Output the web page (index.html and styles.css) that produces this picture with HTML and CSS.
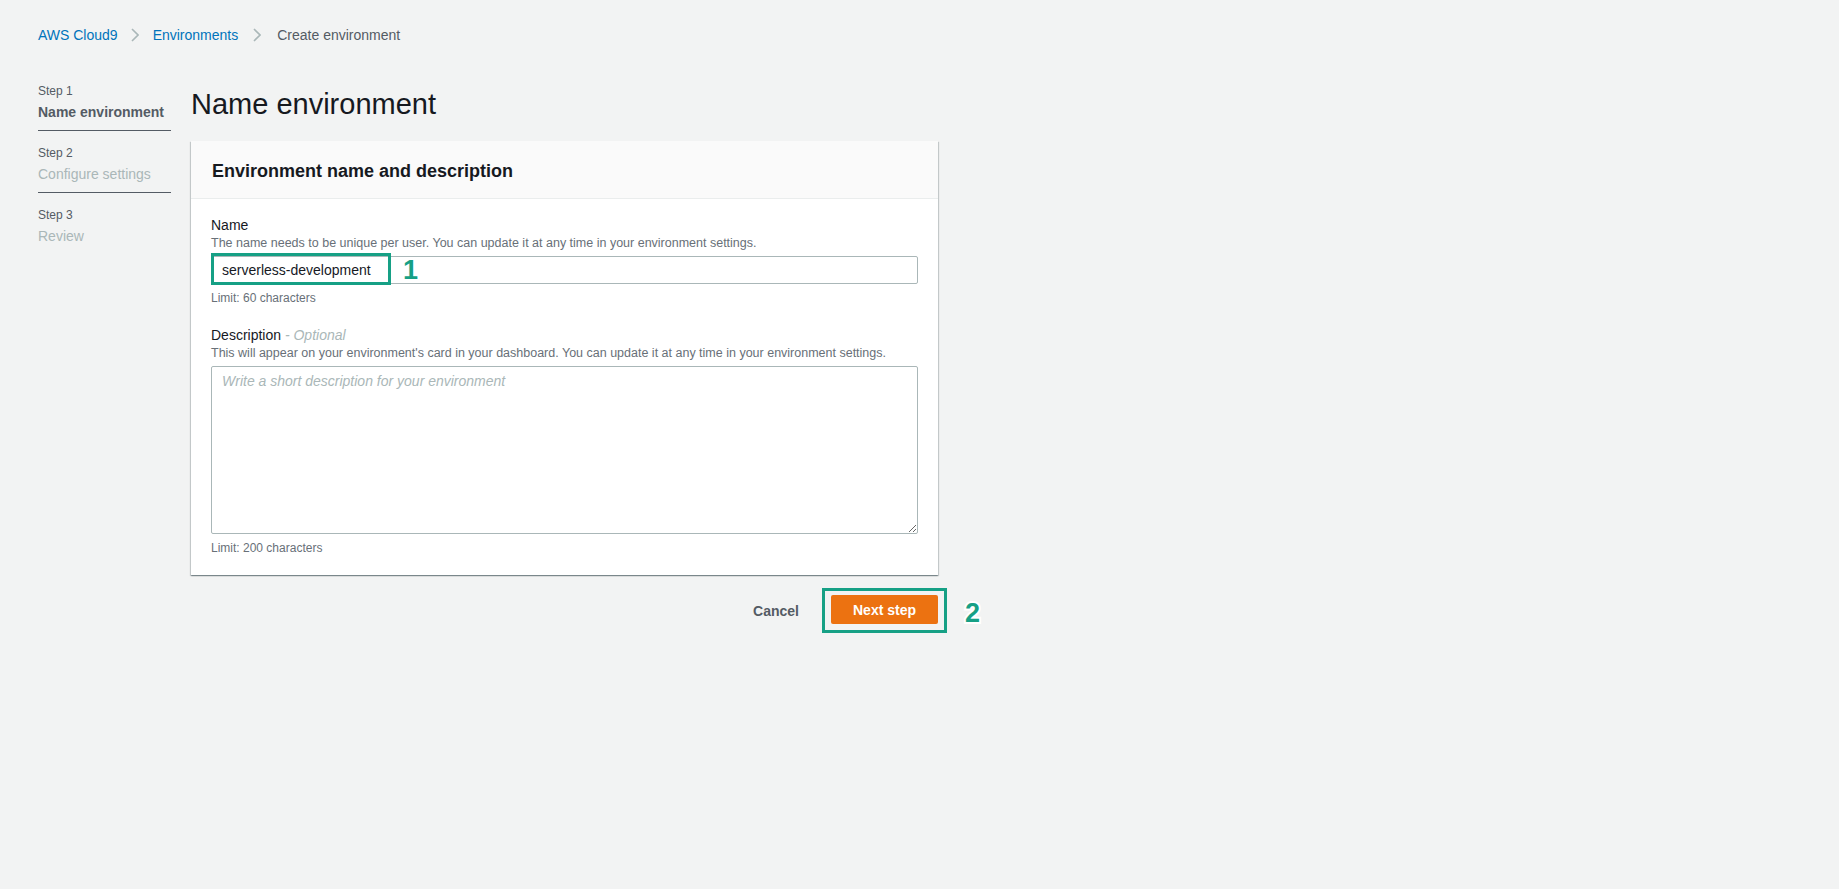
FILE: index.html
```html
<!DOCTYPE html>
<html lang="en">
<head>
  <meta charset="UTF-8">
  <title>Create environment - AWS Cloud9</title>
  <link rel="stylesheet" href="styles.css">
</head>
<body>

  <nav class="breadcrumbs">
    <a href="#">AWS Cloud9</a>
    <span class="sep"><svg width="8" height="14" viewBox="0 0 8 14"><path d="M1 1l6 6-6 6" fill="none" stroke="#aab7b8" stroke-width="1.6"/></svg></span>
    <a href="#">Environments</a>
    <span class="sep sep-last"><svg width="8" height="14" viewBox="0 0 8 14"><path d="M1 1l6 6-6 6" fill="none" stroke="#aab7b8" stroke-width="1.6"/></svg></span>
    <span class="current">Create environment</span>
  </nav>

  <div class="wizard">
    <ul class="steps">
      <li class="step active">
        <span class="step-num">Step 1</span>
        <span class="step-name">Name environment</span>
      </li>
      <li class="step">
        <span class="step-num">Step 2</span>
        <span class="step-name">Configure settings</span>
      </li>
      <li class="step">
        <span class="step-num">Step 3</span>
        <span class="step-name">Review</span>
      </li>
    </ul>

    <main class="content">
      <h1 class="page-title">Name environment</h1>

      <section class="card">
        <header class="card-header">
          <h2>Environment name and description</h2>
        </header>
        <div class="card-body">
          <div class="field">
            <label class="field-label" for="env-name">Name</label>
            <div class="field-help">The name needs to be unique per user. You can update it at any time in your environment settings.</div>
            <div class="input-wrap">
              <input id="env-name" class="input" type="text" value="serverless-development">
              <span class="mark mark-name"></span>
              <span class="badge badge-1">1</span>
            </div>
            <div class="field-hint">Limit: 60 characters</div>
          </div>

          <div class="field">
            <label class="field-label" for="env-desc">Description <i class="optional">- Optional</i></label>
            <div class="field-help">This will appear on your environment's card in your dashboard. You can update it at any time in your environment settings.</div>
            <textarea id="env-desc" class="textarea" placeholder="Write a short description for your environment"></textarea>
            <div class="field-hint">Limit: 200 characters</div>
          </div>
        </div>
      </section>

      <div class="actions">
        <button class="btn-link">Cancel</button>
        <div class="btn-wrap">
          <button class="btn-primary">Next step</button>
          <span class="badge badge-2">2</span>
        </div>
      </div>
    </main>
  </div>

</body>
</html>
```

FILE: styles.css
```css
body {
  margin: 0;
  background-color: #f2f3f3;
  font-family: "Liberation Sans", Arial, sans-serif;
  color: #16191f;
}

/* fil d'ariane */
.breadcrumbs {
  display: flex;
  align-items: center;
  padding: 25px 38px 0;
  font-size: 14px;
  line-height: 20px;
}

.breadcrumbs a {
  color: #0073bb;
  text-decoration: none;
}

.breadcrumbs .sep {
  display: flex;
  margin: 0 14px 0 13px;
}

.breadcrumbs .sep-last {
  margin: 0 16px 0 15px;
}

.breadcrumbs .current {
  color: #545b64;
}

/* mise en page : étapes + contenu */
.wizard {
  display: flex;
  gap: 20px;
  padding: 0 38px 40px;
  margin-top: 38px;
}

.steps {
  list-style: none;
  margin: 0;
  padding: 0;
  width: 133px;
  flex-shrink: 0;
}

.step {
  display: flex;
  flex-direction: column;
  padding: 14px 0 9px;
  border-bottom: 1px solid #545b64;
}

.step:first-child {
  padding-top: 0;
}

.step:last-child {
  border-bottom: none;
}

.step-num {
  font-size: 12px;
  line-height: 16px;
  color: #545b64;
}

.step-name {
  margin-top: 4px;
  font-size: 14px;
  line-height: 18px;
  color: #aab7b8;
}

.step.active .step-name {
  color: #545b64;
  font-weight: bold;
}

.content {
  width: 747px;
}

.page-title {
  margin: 3px 0 0;
  font-size: 29px;
  line-height: 36px;
  font-weight: normal;
  color: #16191f;
}

/* carte */
.card {
  margin-top: 19px;
  background-color: white;
  box-shadow: 0 1px 1px 0 rgba(0, 28, 36, 0.3), 1px 1px 1px 0 rgba(0, 28, 36, 0.15), -1px 1px 1px 0 rgba(0, 28, 36, 0.15);
}

.card-header {
  background-color: #fafafa;
  padding: 19px 20px 16px 21px;
  border-bottom: 1px solid #eaeded;
}

.card-header h2 {
  margin: 0;
  font-size: 18px;
  line-height: 22px;
  font-weight: bold;
}

.card-body {
  padding: 16px 20px 19px;
}

.field + .field {
  margin-top: 19px;
}

.field-label {
  display: block;
  font-size: 14px;
  line-height: 20px;
}

.optional {
  color: #aab7b8;
}

.field-help,
.field-hint {
  font-size: 12px;
  line-height: 16px;
  color: #687078;
}

.field-help {
  font-size: 12.5px;
}

.field-hint {
  margin-top: 6px;
}

.input-wrap {
  position: relative;
  margin-top: 5px;
}

.input,
.textarea {
  display: block;
  box-sizing: border-box;
  width: 100%;
  border: 1px solid #aab7b8;
  border-radius: 2px;
  font-family: inherit;
  font-size: 14px;
  color: #16191f;
  background: white;
}

.input {
  height: 28px;
  padding: 0 10px;
}

.textarea {
  margin-top: 5px;
  height: 168px;
  padding: 4px 10px;
  line-height: 20px;
  resize: vertical;
}

.textarea::placeholder {
  color: #aab7b8;
  font-style: italic;
}

/* boutons */
.actions {
  display: flex;
  justify-content: flex-end;
  align-items: center;
  gap: 23px;
  margin-top: 13px;
  margin-right: -9px;
}

.btn-link {
  border: none;
  background: none;
  padding: 0;
  font-family: inherit;
  font-size: 14px;
  font-weight: bold;
  color: #545b64;
}

/* cadre vert autour du bouton principal */
.btn-wrap {
  position: relative;
  padding: 4px 6px 6px;
  border: 3px solid #16a085;
}

.btn-primary {
  display: block;
  width: 107px;
  height: 29px;
  border: none;
  border-radius: 2px;
  background-color: #ec7211;
  color: white;
  font-family: inherit;
  font-size: 14px;
  font-weight: bold;
}

/* annotations */
.mark {
  position: absolute;
  border: 3px solid #16a085;
  pointer-events: none;
}

.mark-name {
  left: 0;
  top: -3px;
  width: 174px;
  height: 26px;
}

.badge {
  position: absolute;
  font-size: 27px;
  line-height: 28px;
  font-weight: bold;
  color: #16a085;
  -webkit-text-stroke: 4px white;
  paint-order: stroke fill;
}

.badge-1 {
  left: 192px;
  top: 0;
}

.badge-2 {
  left: 140px;
  top: 8px;
}
```
